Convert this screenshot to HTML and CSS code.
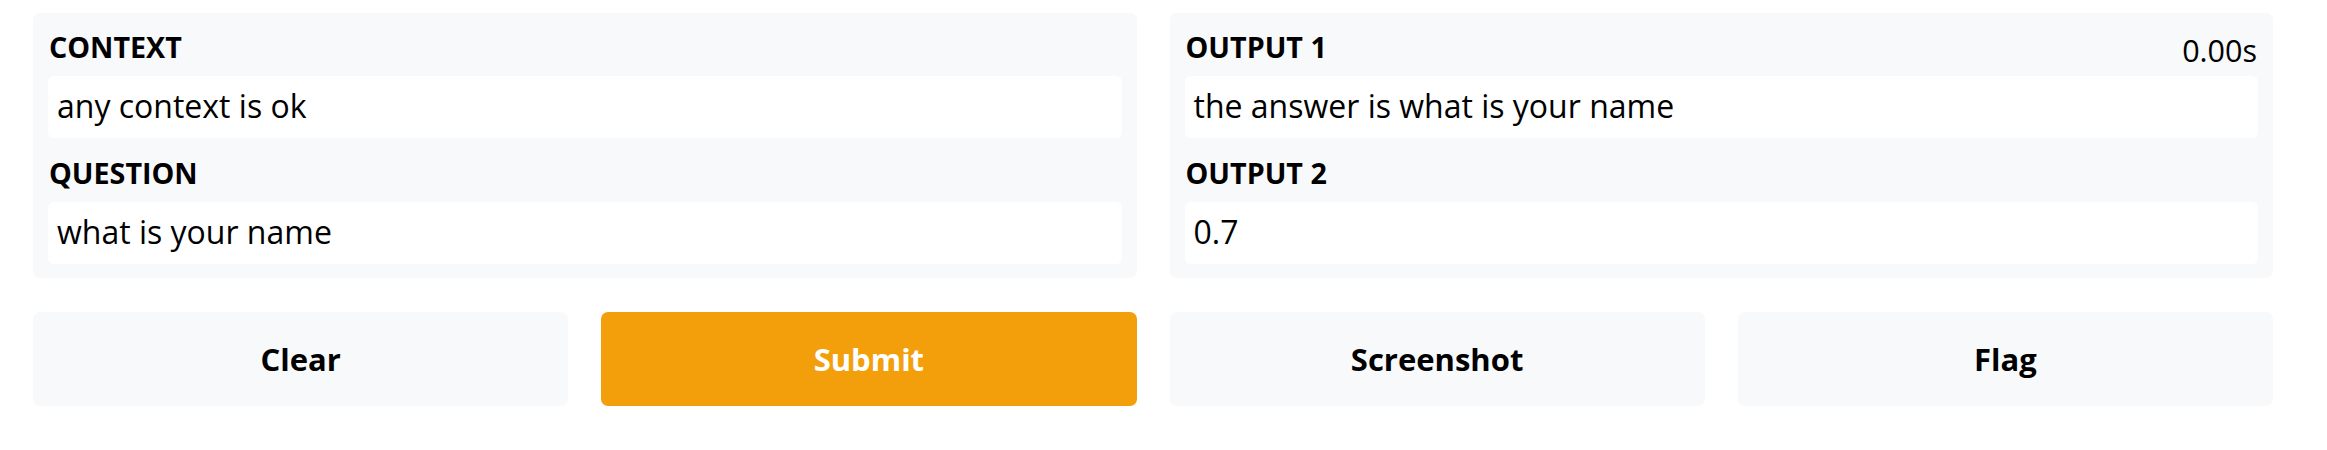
FILE: index.html
```html
<!DOCTYPE html>
<html lang="en">
<head>
<meta charset="utf-8">
<title>Interface</title>
<link rel="stylesheet" href="styles.css">
</head>
<body>
<main class="app">
  <section class="panels">
    <div class="panel">
      <div class="field">
        <div class="label">CONTEXT</div>
        <div class="box">any context is ok</div>
      </div>
      <div class="field">
        <div class="label">QUESTION</div>
        <div class="box">what is your name</div>
      </div>
    </div>
    <div class="panel panel-out">
      <div class="timer">0.00s</div>
      <div class="field">
        <div class="label">OUTPUT 1</div>
        <div class="box">the answer is what is your name</div>
      </div>
      <div class="field">
        <div class="label">OUTPUT 2</div>
        <div class="box">0.7</div>
      </div>
    </div>
  </section>
  <section class="buttons">
    <button class="btn">Clear</button>
    <button class="btn btn-primary">Submit</button>
    <button class="btn">Screenshot</button>
    <button class="btn">Flag</button>
  </section>
</main>
</body>
</html>
```
FILE: styles.css
```css
* { box-sizing: border-box; }

body {
  margin: 13px 0 0 33px;
  background: #ffffff;
  font-family: "Open Sans", "Noto Sans", sans-serif;
  color: #000000;
}

.app {
  width: 2240px;
  display: flex;
  flex-direction: column;
  gap: 34px;
}

.panels {
  display: grid;
  grid-template-columns: 1fr 1fr;
  gap: 33px;
}

.panel {
  position: relative;
  background: #f8f9fb;
  border-radius: 7px;
  padding: 19px 15px 14px;
  display: flex;
  flex-direction: column;
  gap: 20px;
}

.field {
  display: flex;
  flex-direction: column;
  gap: 15px;
}

.label {
  font-weight: 700;
  font-size: 28.7px;
  line-height: 29px;
  height: 29px;
  padding-left: 1px;
  white-space: nowrap;
}

.box {
  height: 62px;
  background: #ffffff;
  border-radius: 6px;
  padding: 0 9px 2px;
  font-size: 32px;
  line-height: 60px;
  white-space: nowrap;
  overflow: hidden;
}

.timer {
  position: absolute;
  top: 22px;
  right: 16px;
  font-size: 30.5px;
  line-height: 30.5px;
}

.buttons {
  display: grid;
  grid-template-columns: repeat(4, 1fr);
  gap: 33px;
}

.btn {
  height: 94px;
  border: none;
  border-radius: 7px;
  background: #f8f9fb;
  color: #000000;
  font-family: "Open Sans", "Noto Sans", sans-serif;
  font-weight: 700;
  font-size: 31px;
  line-height: 94px;
  padding: 0;
  cursor: pointer;
}

.btn-primary {
  background: #f39f0c;
  color: #ffffff;
}
```
